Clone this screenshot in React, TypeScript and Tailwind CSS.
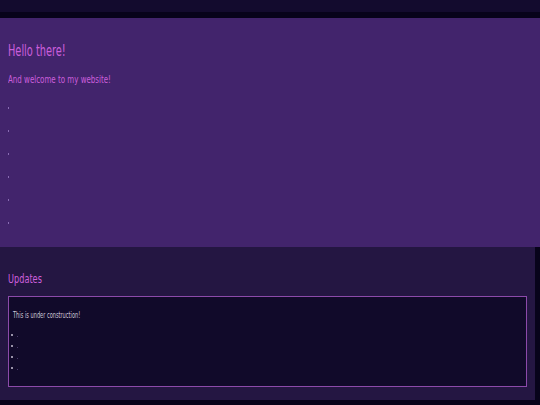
import React from 'react';

const font = { fontFamily: '"DejaVu Sans Condensed", "Liberation Sans Narrow", "Liberation Sans", sans-serif' };

const App: React.FC = () => {
    const dots = [1, 2, 3, 4, 5, 6];
    const updates = [1, 2, 3, 4];
    return (
        <div className="w-[540px] h-[405px] bg-[#07031a] overflow-hidden" style={font}>
            <div className="h-[12px] bg-[#130b2e]" />
            <div className="h-[6px] bg-[#07031a]" />
            <section className="bg-[#42246c] pt-[23px] pb-[13px] px-[8px]">
                <h1 className="text-[16px] leading-[20px] text-[#cc5fdc] origin-left scale-x-[0.68] whitespace-nowrap">Hello there!</h1>
                <p className="mt-[11px] text-[10.5px] leading-[14px] text-[#cc5fdc] origin-left scale-x-[0.75] whitespace-nowrap">And welcome to my website!</p>
                <ul className="mt-[10px]">
                    {dots.map((d) => (
                        <li key={d} className="h-[23px] flex items-center">
                            <span className="w-[1px] h-[2px] bg-[#8a6cb4]" />
                        </li>
                    ))}
                </ul>
            </section>
            <section className="w-[535px] bg-[#241642] pt-[23px] pb-[13px] px-[8px]">
                <h2 className="text-[13px] leading-[18px] text-[#cc5fdc] origin-left scale-x-[0.7] whitespace-nowrap">Updates</h2>
                <div className="mt-[8px] h-[91px] border border-[#8c4aaa] bg-[#110a2a] pt-[14px] pl-[4px]">
                    <p className="text-[8px] leading-[10px] text-[#d0c9da] origin-left scale-x-[0.7] whitespace-nowrap">This is under construction!</p>
                    <ul className="mt-[8px] -ml-[2px]">
                        {updates.map((u) => (
                            <li key={u} className="h-[11px] flex items-center gap-[4px]">
                                <span className="w-[2px] h-[2px] rounded-full bg-[#c9c2d4]" />
                                <span className="w-[1px] h-[1px] mt-[3px] bg-[#4a3a6a]" />
                            </li>
                        ))}
                    </ul>
                </div>
            </section>
        </div>
    );
};

export default App;
